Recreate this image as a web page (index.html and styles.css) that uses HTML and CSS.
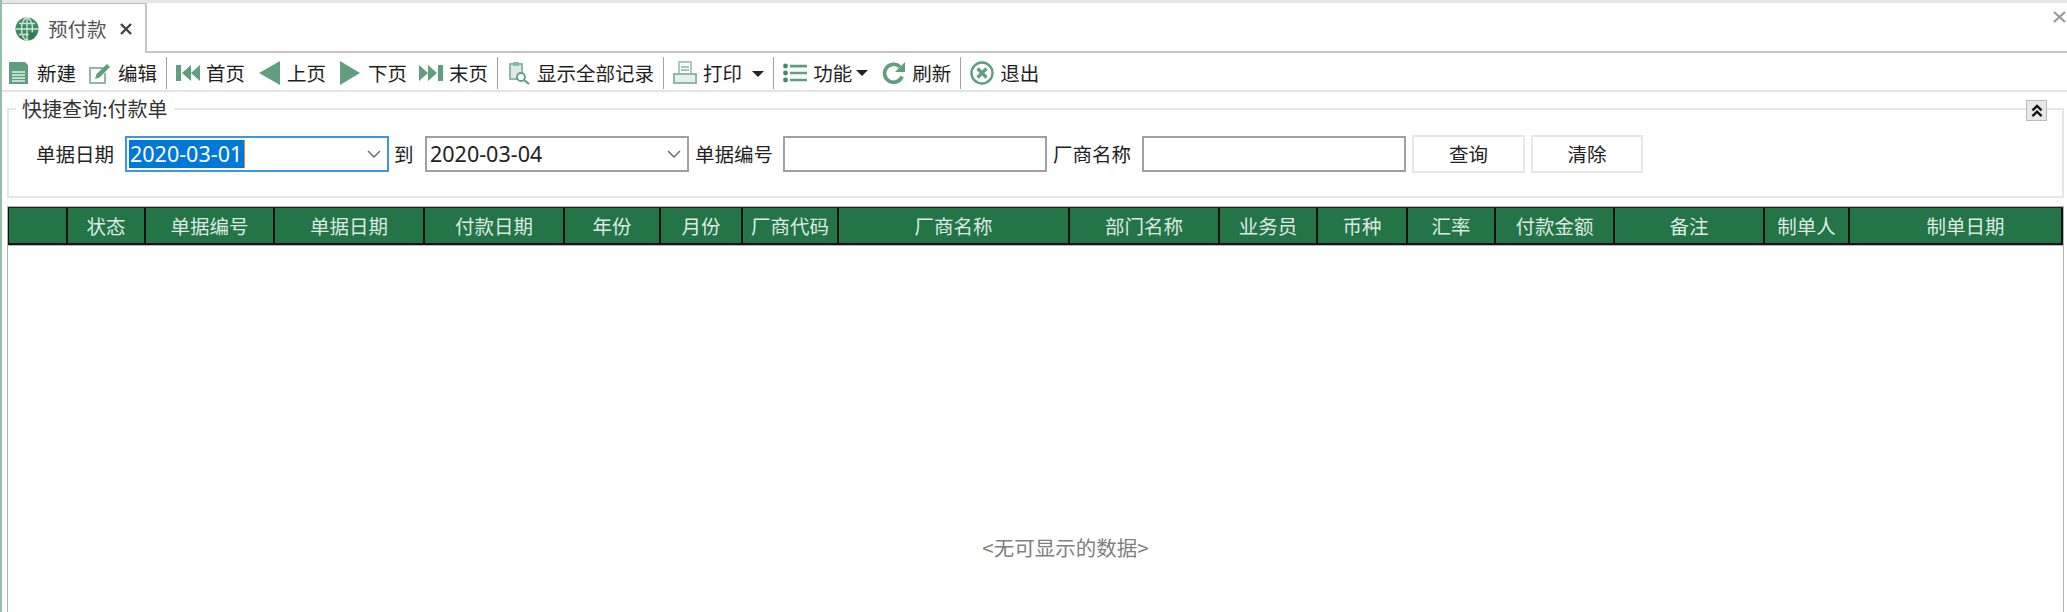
FILE: index.html
```html
<!DOCTYPE html>
<html lang="zh-CN">
<head>
<meta charset="utf-8">
<title>预付款</title>
<link rel="stylesheet" href="styles.css">
</head>
<body>
<div class="app">
  <div class="tabstrip">
    <div class="tab">
      <svg class="globe" viewBox="0 0 24 24"><circle cx="12" cy="12" r="11.5" fill="#3d8a60"/><path d="M12 1v22M1 12h22M4 6.5h16M4 17.5h16" stroke="#cfe4d8" stroke-width="1.4" fill="none"/><ellipse cx="12" cy="12" rx="5.5" ry="11" stroke="#cfe4d8" stroke-width="1.4" fill="none"/><path d="M14 15l8 1-4 6-5 1z" fill="#2f7a52"/></svg>
      <span class="tab-title">预付款</span>
      <svg class="tab-close" viewBox="0 0 12 12"><path d="M1 1l10 10M11 1L1 11" stroke="#444" stroke-width="2.4"/></svg>
    </div>
    <svg class="strip-close" viewBox="0 0 13 12"><path d="M1 1l11 10M12 1L1 11" stroke="#999" stroke-width="2.2"/></svg>
  </div>

  <div class="toolbar">
    <div class="tool"><svg viewBox="0 0 24 24"><path d="M2 1h16l3 3v19H2z" fill="#5f9e7e"/><path d="M5 11h13M5 14h13M5 17h13M5 20h13" stroke="#e4f0e9" stroke-width="1.3"/></svg><span>新建</span></div>
    <div class="tool"><svg viewBox="0 0 24 24"><path d="M15 7H2v15h15V12" fill="none" stroke="#8dbba3" stroke-width="2"/><path d="M7 18l1.5-5L19 3l3 3L11.5 16.500z" fill="#5f9e7e"/></svg><span>编辑</span></div>
    <i class="sep"></i>
    <div class="tool"><svg viewBox="0 0 24 24"><path d="M0 4h5v16H0zM6 12l9-8v16zM15 12l9-8v16z" fill="#5f9e7e"/></svg><span>首页</span></div>
    <div class="tool"><svg viewBox="0 0 24 24"><path d="M2 12L23 0v24z" fill="#5f9e7e"/></svg><span>上页</span></div>
    <div class="tool"><svg viewBox="0 0 24 24"><path d="M22 12L2 0v24z" fill="#5f9e7e"/></svg><span>下页</span></div>
    <div class="tool"><svg viewBox="0 0 24 24"><path d="M24 4h-5v16h5zM18 12L9 4v16zM9 12L0 4v16z" fill="#5f9e7e"/></svg><span>末页</span></div>
    <i class="sep"></i>
    <div class="tool"><svg viewBox="0 0 24 24"><path d="M3 3h12v15H3z" fill="#dcebe3" stroke="#8dbba3" stroke-width="2"/><path d="M6 1h6v4H6z" fill="#8dbba3"/><circle cx="14" cy="16" r="4" fill="#fff" stroke="#5f9e7e" stroke-width="1.8"/><path d="M17 19l5 4" stroke="#5f9e7e" stroke-width="2.2"/></svg><span>显示全部记录</span></div>
    <i class="sep"></i>
    <div class="tool"><svg viewBox="0 0 24 24"><path d="M6 12V1h12v11M8 6h8M8 9h8" fill="none" stroke="#a3c8b5" stroke-width="1.8"/><path d="M1 13h22v9H1z" fill="#e6f0ea" stroke="#8dbba3" stroke-width="2"/></svg><span>打印</span></div>
    <i class="caret caret-print"></i>
    <i class="sep"></i>
    <div class="tool tool-tight"><svg viewBox="0 0 24 24"><circle cx="2.500" cy="5" r="2.400" fill="#3f8a62"/><circle cx="2.500" cy="12" r="2.400" fill="#3f8a62"/><circle cx="2.500" cy="19" r="2.400" fill="#3f8a62"/><path d="M7 3.800h17v2.600H7zM7 10.700h17v2.600H7zM7 17.700h17v2.600H7z" fill="#5f9e7e"/></svg><span>功能</span></div>
    <i class="caret caret-func"></i>
    <div class="tool"><svg viewBox="0 0 24 24"><path d="M20 15.500A9 9 0 1 1 18 6" fill="none" stroke="#5f9e7e" stroke-width="3.600"/><path d="M23 1v10H13z" fill="#5f9e7e"/></svg><span>刷新</span></div>
    <i class="sep"></i>
    <div class="tool"><svg viewBox="0 0 24 24"><circle cx="12" cy="12" r="10.500" fill="none" stroke="#5f9e7e" stroke-width="2.400"/><path d="M7.500 7.500l9 9M16.500 7.500l-9 9" stroke="#5f9e7e" stroke-width="3.200"/></svg><span>退出</span></div>
  </div>

  <section class="groupbox">
    <div class="legend">快捷查询:付款单</div>
    <button class="collapse" type="button"><svg viewBox="0 0 14 14"><path d="M3 6.500l4-4 4 4M3 11.500l4-4 4 4" fill="none" stroke="#111" stroke-width="2"/></svg></button>
    <div class="query">
      <label class="lbl lbl-first">单据日期</label>
      <div class="combo combo-active"><span class="sel">2020-03-01</span><svg class="chev" viewBox="0 0 14 8"><path d="M1 1l6 6 6-6" fill="none" stroke="#666" stroke-width="1.400"/></svg></div>
      <label class="lbl lbl-to">到</label>
      <div class="combo combo-second"><span class="val">2020-03-04</span><svg class="chev" viewBox="0 0 14 8"><path d="M1 1l6 6 6-6" fill="none" stroke="#666" stroke-width="1.400"/></svg></div>
      <label class="lbl lbl-next">单据编号</label>
      <input class="box" type="text">
      <label class="lbl lbl-next">厂商名称</label>
      <input class="box box-last" type="text">
      <button class="btn btn-query" type="button">查询</button>
      <button class="btn btn-clear" type="button">清除</button>
    </div>
  </section>

  <section class="grid">
    <div class="grid-head">
      <div class="cell"></div>
      <div class="cell">状态</div>
      <div class="cell">单据编号</div>
      <div class="cell">单据日期</div>
      <div class="cell">付款日期</div>
      <div class="cell">年份</div>
      <div class="cell">月份</div>
      <div class="cell">厂商代码</div>
      <div class="cell">厂商名称</div>
      <div class="cell">部门名称</div>
      <div class="cell">业务员</div>
      <div class="cell">币种</div>
      <div class="cell">汇率</div>
      <div class="cell">付款金额</div>
      <div class="cell">备注</div>
      <div class="cell">制单人</div>
      <div class="cell cell-last">制单日期</div>
    </div>
    <div class="grid-body"><span class="empty">&lt;无可显示的数据&gt;</span></div>
  </section>
</div>
</body>
</html>
```

FILE: styles.css
```css
* { box-sizing: border-box; }
html, body { margin: 0; height: 100%; background: #fff; }
body { overflow: hidden; font-family: "Noto Sans CJK SC", "Noto Sans", sans-serif; font-size: 19.5px; color: #222; }
.app { height: 612px; border-left: 2px solid #93bfa7; display: flex; flex-direction: column; overflow: hidden; }

.tabstrip { height: 53px; flex: none; border-top: 3px solid #e6e6e6; border-bottom: 2px solid #c4c4c4; display: flex; justify-content: space-between; align-items: flex-start; }
.tab { width: 145px; height: 50px; background: #fff; border-top: 1px solid #bbb; border-right: 2px solid #c4c4c4; display: flex; align-items: center; padding-left: 13px; }
.globe { width: 24px; height: 24px; flex: none; }
.tab-title { margin-left: 9px; width: 72px; color: #555; line-height: 1; }
.tab-close { width: 12px; height: 12px; flex: none; }
.strip-close { width: 13px; height: 12px; margin: 8px 1px 0 0; flex: none; }

.toolbar { height: 39px; flex: none; border-bottom: 2px solid #e4e4e4; display: flex; align-items: center; padding: 2px 0 0 5px; line-height: 1; }
.tool { display: flex; align-items: center; gap: 6px; margin-right: 12px; color: #1f1f1f; }
.tool svg { width: 24px; height: 24px; flex: none; }
.tool span { white-space: nowrap; }
.tool-tight { margin-right: 4px; }
.sep { width: 1px; height: 32px; background: #a0a0a0; margin: 0 9px 0 -3px; flex: none; }
.caret { width: 0; height: 0; border-left: 6px solid transparent; border-right: 6px solid transparent; border-top: 6px solid #222; flex: none; }
.caret-print { margin: 2px 12px 0 -2px; }
.caret-func { margin: 0 14px 0 0; }

.groupbox { position: relative; height: 90px; margin: 16px 3px 0 5px; flex: none; border: 2px solid #e6e6e6; }
.legend { position: absolute; left: 7px; top: -13px; padding: 0 6px 0 6px; background: #fff; font-size: 20px; line-height: 24px; color: #333; }
.collapse { position: absolute; right: 15px; top: -10px; width: 21px; height: 21px; padding: 1px; border: 1px solid #bbb; background: #e8e8e8; display: flex; align-items: center; justify-content: center; }
.collapse svg { width: 16px; height: 16px; }
.query { display: flex; align-items: center; height: 38px; margin-top: 25px; padding-left: 27px; line-height: 1; }
.lbl { flex: none; color: #222; white-space: nowrap; }
.lbl-first { width: 78px; }
.lbl-to { width: 20px; margin-left: 5px; }
.lbl-next { width: 78px; margin-left: 6px; }

.combo { width: 264px; height: 36px; margin-left: 11px; flex: none; display: flex; align-items: center; justify-content: space-between; padding: 0 6px 0 2px; font-family: "Noto Sans", sans-serif; font-size: 21.5px; border: 2px solid #a0a0a0; background: #fff; }
.combo-active { border-color: #3f96e0; }
.combo-second { margin-left: 11px; }
.sel { background: #0078d7; color: #fff; height: 28px; line-height: 28px; padding: 0 2px 0 1px; border-right: 1px solid #e08a3c; }
.val { padding-left: 1px; color: #222; }
.chev { width: 14px; height: 8px; flex: none; }

.box { width: 264px; height: 36px; margin-left: 10px; flex: none; border: 2px solid #a0a0a0; background: #fff; padding: 0; border-radius: 0; outline: 0; }
.box-last { width: 264px; margin-left: 11px; }
.btn { width: 113px; height: 38px; flex: none; margin-left: 6px; padding: 0; border: 2px solid #e6e6e6; background: #fff; font: inherit; color: #222; border-radius: 0; }
.btn-clear { width: 112px; }

.grid { flex: 1; margin: 8px 3px 0 5px; border: 1px solid #b4b4b4; border-bottom: 0; display: flex; flex-direction: column; min-height: 0; }
.grid-head { display: grid; grid-template-columns: 60px 78px 129px 150px 140px 96px 82px 96px 231px 150px 98px 90px 88px 119px 150px 85px 213px; height: 38px; flex: none; background: #237446; border-top: 1px solid #222; border-bottom: 2px solid #151515; box-shadow: 0 1px 0 #b8b8b8; color: #dcebe2; }
.cell { display: flex; align-items: center; justify-content: center; border-right: 2px solid #111; line-height: 1; white-space: nowrap; }
.cell:first-child { border-left: 1px solid #111; }
.cell-last { padding-left: 20px; }
.grid-body { flex: 1; display: flex; justify-content: center; align-items: flex-start; padding: 289px 0 0 60px; }
.empty { color: #808080; font-size: 20.5px; line-height: 26px; }
```
